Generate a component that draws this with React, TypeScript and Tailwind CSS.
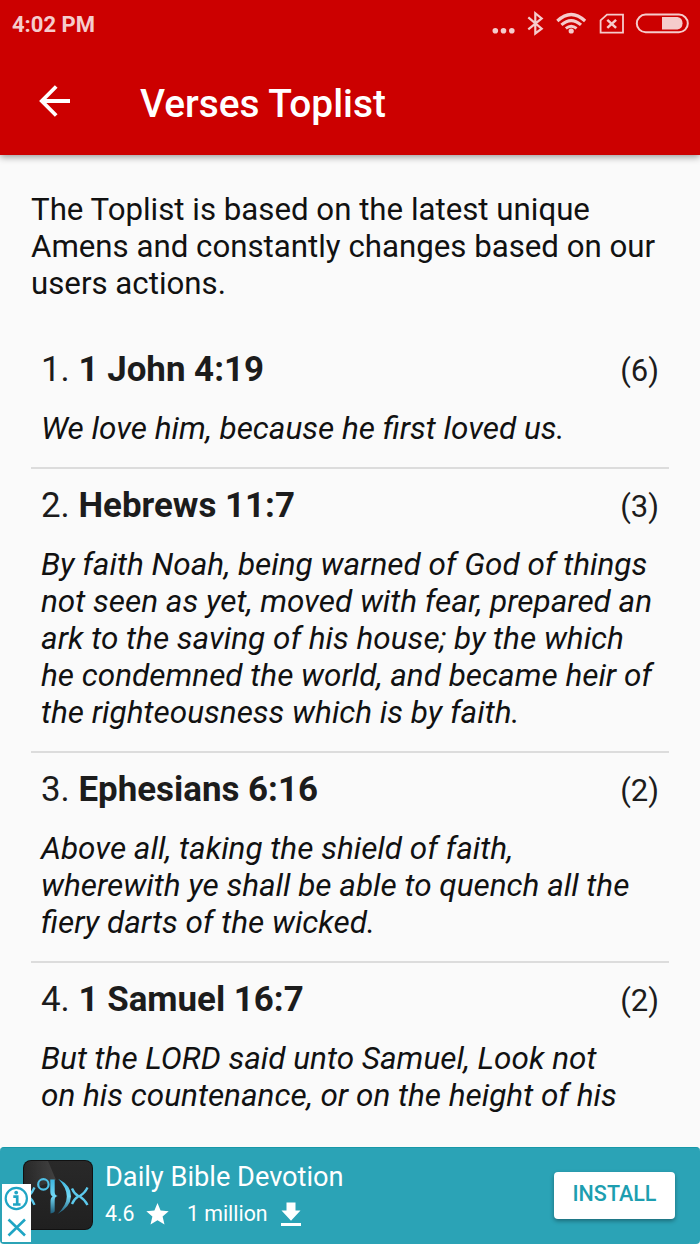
interface Verse {
    title: string;
    count: number;
    text: string[];
}

const verses: Verse[] = [
    {
        title: "1 John 4:19",
        count: 6,
        text: ["We love him, because he first loved us."],
    },
    {
        title: "Hebrews 11:7",
        count: 3,
        text: [
            "By faith Noah, being warned of God of things",
            "not seen as yet, moved with fear, prepared an",
            "ark to the saving of his house; by the which",
            "he condemned the world, and became heir of",
            "the righteousness which is by faith.",
        ],
    },
    {
        title: "Ephesians 6:16",
        count: 2,
        text: [
            "Above all, taking the shield of faith,",
            "wherewith ye shall be able to quench all the",
            "fiery darts of the wicked.",
        ],
    },
    {
        title: "1 Samuel 16:7",
        count: 2,
        text: [
            "But the LORD said unto Samuel, Look not",
            "on his countenance, or on the height of his",
        ],
    },
];

function StatusIcons() {
    return (
        <svg
            width="200"
            height="30"
            viewBox="490 9 200 30"
            fill="none"
            stroke="#f5cccc"
            strokeWidth="1.9"
        >
            <g fill="#f5cccc" stroke="none">
                <circle cx="495.3" cy="30.7" r="2.8" />
                <circle cx="503.5" cy="30.7" r="2.8" />
                <circle cx="511.8" cy="30.7" r="2.8" />
                <circle cx="571.2" cy="31" r="2.6" />
                <path d="M662 17h15.5a6.4 6.4 0 0 1 0 12.5H662z" />
            </g>
            <path d="M528.3 17.3l13.4 11.4-6.4 4.8V13.2l6.4 5.2-13.4 11" strokeWidth="2.2" />
            <g strokeWidth="3.1">
                <path d="M557.3 21q13.9-13 27.8 0" />
                <path d="M561.4 24.9q9.8-8.7 19.6 0" />
                <path d="M565.8 28.4q5.4-4.4 10.8 0" strokeWidth="2.8" />
            </g>
            <path d="M607 14.6h16v18h-22.4V20.4z" strokeWidth="1.8" />
            <path d="M607.3 19.8l8.8 8M616.1 19.8l-8.8 8" strokeWidth="2.5" />
            <rect x="636.8" y="14.6" width="51" height="17.6" rx="8.8" strokeWidth="2" />
        </svg>
    );
}

function BackArrow() {
    return (
        <svg width="32" height="32" viewBox="0 0 32 32" fill="none" stroke="#fff" strokeWidth="3.8">
            <path d="M17.2 1.5L2.8 16l14.4 14.5M3 16h28" />
        </svg>
    );
}

function DevotionLogo() {
    return (
        <svg width="70" height="70" viewBox="0 0 70 70" fill="none">
            <defs>
                <linearGradient id="tile" x1="0" y1="0" x2="0" y2="1">
                    <stop offset="0" stopColor="#292929" />
                    <stop offset="1" stopColor="#202020" />
                </linearGradient>
                <linearGradient id="glow" x1="0" y1="0" x2="0" y2="1">
                    <stop offset="0" stopColor="#3cb5df" />
                    <stop offset="0.5" stopColor="#72d8f5" />
                    <stop offset="1" stopColor="#1d5b77" />
                </linearGradient>
                <linearGradient id="shine" x1="0" y1="0" x2="1" y2="0">
                    <stop offset="0" stopColor="#fff" stopOpacity="0" />
                    <stop offset="1" stopColor="#fff" stopOpacity="0.12" />
                </linearGradient>
            </defs>
            <rect width="70" height="70" rx="8" fill="#111" />
            <rect x="1" y="1" width="68" height="68" rx="7" fill="url(#tile)" />
            <path d="M1 8a7 7 0 0 1 7-7h17l8 19L1 32z" fill="url(#shine)" />
            <circle cx="20.4" cy="24.4" r="5.2" stroke="#4fc0e6" strokeWidth="2.2" />
            <path
                d="M27.3 19.5h4.4v12.5q0 3.3 3 4-3 .7-3 4V51q0 1.8-4.2 2.5v-12q0-4 2.1-5-2.3-1-2.3-5z"
                fill="url(#glow)"
            />
            <path d="M35.2 18.8Q48.6 26 48 36.5T34.5 54Q43.8 45 43.8 36.5T35.2 18.8z" fill="url(#glow)" />
            <path
                d="M11.5 27.5q-2 5-6 8.7 4 3.8 6 8.7M49 28.5q2 5 6.5 7.8Q51 39 49 44M64.5 27.5q-2.5 5.5-8 8.7 5.5 3.5 8 8.7"
                stroke="#5cc9ec"
                strokeWidth="2.3"
            />
        </svg>
    );
}

function AdBanner() {
    return (
        <div className="relative flex h-[97px] shrink-0 rounded-[4px] border-t border-[#1798a8] bg-[#2ba3b6] text-white">
            <div className="ml-[23px] mt-3 h-[70px] w-[70px]">
                <DevotionLogo />
            </div>
            <div className="ml-3 mt-[13px] flex-1">
                <div className="whitespace-nowrap text-[27.2px] leading-[33px]">Daily Bible Devotion</div>
                <div className="mt-[5px] flex h-[30px] items-center text-[21.3px] leading-[30px]">
                    <span className="w-10">4.6</span>
                    <svg width="24" height="24" viewBox="0 0 24 24" fill="#fff">
                        <path d="M12.5 1l3.1 7.5 8.1.7-6.1 5.3 1.9 8.1-7-4.3-7 4.3 1.9-8.1-6.1-5.3 8.1-.7z" />
                    </svg>
                    <span className="ml-[18px] w-[94px] whitespace-nowrap">1 million</span>
                    <svg width="20" height="26" viewBox="0 0 20 26" fill="#fff">
                        <path d="M5.5 1.5h9v8h5L10 19.8.5 9.5h5zM0 22h20v3H0z" />
                    </svg>
                </div>
            </div>
            <button className="mr-[25px] mt-6 h-[47px] w-[121px] rounded-[4px] bg-white pb-[3px] text-[21.5px] font-medium text-[#1d9eb0] shadow-[0_2px_4px_rgba(0,0,0,0.35)]">
                INSTALL
            </button>
            {/* Ad info and close */}
            <div className="absolute left-[2px] top-9 h-[58px] w-[29px] bg-white">
                <svg width="29" height="58" viewBox="0 0 29 58" fill="none" stroke="#1fa5c4" strokeWidth="2.6">
                    <circle cx="14.3" cy="14.5" r="10.6" strokeWidth="2.2" />
                    <path d="M11.3 12.7h3.9v8M11 20.5h7.5" strokeWidth="2.7" />
                    <circle cx="14.2" cy="8.6" r="1.9" fill="#1fa5c4" stroke="none" />
                    <path d="M6.5 35.5l16.5 16M23 35.5l-16.5 16" />
                </svg>
            </div>
        </div>
    );
}

export default function App() {
    return (
        <div className="flex h-[1244px] w-[700px] flex-col overflow-hidden bg-[#fafafa] font-[Roboto,sans-serif] text-black">
            <header className="relative h-[155px] shrink-0 bg-[#cc0000] shadow-[0_2px_7px_rgba(0,0,0,0.4)]">
                <div className="flex h-12 items-center justify-between pl-3 pr-[10px]">
                    <span className="text-[22px] font-bold text-[#f5cccc]">4:02 PM</span>
                    <StatusIcons />
                </div>
                <div className="flex h-[107px] items-start pl-[39px] pt-[37px]">
                    <BackArrow />
                    <h1 className="ml-[69px] mt-[-4px] text-[38.85px] font-medium leading-[46px] text-white">
                        Verses Toplist
                    </h1>
                </div>
            </header>

            <main className="min-h-0 flex-1 overflow-hidden px-[31px] pt-9">
                <p className="whitespace-nowrap text-[31.24px] leading-[37px] text-[#111]">
                    The Toplist is based on the latest unique
                    <br />
                    Amens and constantly changes based on our
                    <br />
                    users actions.
                </p>

                <ol className="mt-[31px]">
                    {verses.map((verse, index) => (
                        <li
                            key={verse.title}
                            className="border-b-2 border-[#dcdcdc] px-[10px] pb-5 pt-4 last:border-b-0"
                        >
                            <div className="flex h-[41px] items-center justify-between text-[#1c1c1c]">
                                <h2 className="text-[34.9px] leading-[41px]">
                                    {index + 1}. <b className="font-bold">{verse.title}</b>
                                </h2>
                                <span className="pt-[2px] text-[31px] leading-[37px]">({verse.count})</span>
                            </div>
                            <p className="mt-5 whitespace-nowrap text-[31.5px] italic leading-[37px] text-[#111]">
                                {verse.text.map((line) => (
                                    <span key={line} className="block">
                                        {line}
                                    </span>
                                ))}
                            </p>
                        </li>
                    ))}
                </ol>
            </main>

            <AdBanner />
        </div>
    );
}
